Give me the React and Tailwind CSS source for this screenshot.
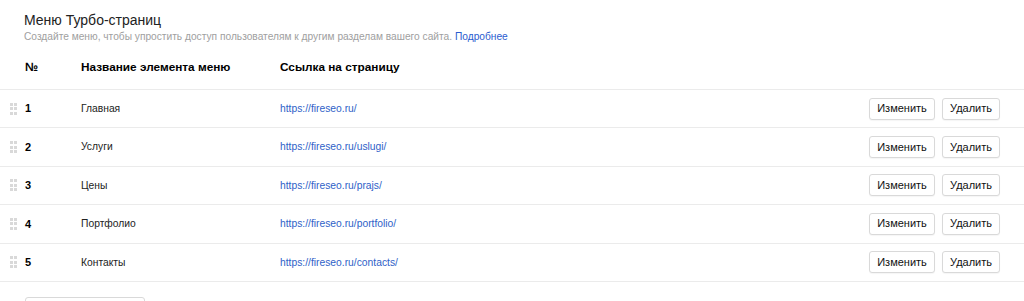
import React from 'react';

const ITEMS = [
  { n: 1, name: 'Главная', url: 'https://fireseo.ru/' },
  { n: 2, name: 'Услуги', url: 'https://fireseo.ru/uslugi/' },
  { n: 3, name: 'Цены', url: 'https://fireseo.ru/prajs/' },
  { n: 4, name: 'Портфолио', url: 'https://fireseo.ru/portfolio/' },
  { n: 5, name: 'Контакты', url: 'https://fireseo.ru/contacts/' },
];

function Handle() {
  return (
    <div className="grid grid-cols-2 gap-x-[1px] gap-y-[1.5px] w-[7px] shrink-0">
      {[0, 1, 2, 3, 4, 5].map(i => (
        <span key={i} className="block w-[3px] h-[3px] bg-[#d9d9d9]" />
      ))}
    </div>
  );
}

function Btn({ children, w }) {
  return (
    <button className={`h-[22px] ${w} border border-[#d9d9d9] rounded-[3px] bg-white text-[11px] text-[#111] leading-none shadow-[0_1px_1px_rgba(0,0,0,0.04)]`}>
      {children}
    </button>
  );
}

export default function App() {
  return (
    <div className="w-[1024px] h-[301px] overflow-hidden bg-white text-black" style={{ fontFamily: '"Liberation Sans", Arial, sans-serif' }}>
      <div className="px-6 pt-[11px]">
        <h1 className="text-[14px] leading-[18px] font-normal text-[#222]">Меню Турбо-страниц</h1>
        <p className="mt-[2px] text-[10.2px] leading-[12px] text-[#a0a0a0]">
          Создайте меню, чтобы упростить доступ пользователям к другим разделам вашего сайта.{' '}
          <a className="text-[#2b5ccf]">Подробнее</a>
        </p>
      </div>

      {/* header */}
      <div className="mt-[18px] h-[29px] border-b border-[#ebebeb] flex items-start pl-[25px] text-[11.8px] leading-[12px] font-bold">
        <div className="w-[56px]">№</div>
        <div className="w-[199px]">Название элемента меню</div>
        <div>Ссылка на страницу</div>
      </div>

      {ITEMS.map(it => (
        <div key={it.n} className="h-[38.4px] border-b border-[#ebebeb] flex items-center pl-[10px] pr-6 text-[10.3px]">
          <Handle />
          <div className="ml-[8px] w-[56px] font-bold text-[11px]">{it.n}</div>
          <div className="w-[199px] text-[#222]">{it.name}</div>
          <a className="text-[#2f5fc8]">{it.url}</a>
          <div className="ml-auto flex gap-[7px]">
            <Btn w="w-[66px]">Изменить</Btn>
            <Btn w="w-[58px]">Удалить</Btn>
          </div>
        </div>
      ))}

      <div className="ml-[25px] mt-[15px] w-[120px] h-[22px] border border-[#d9d9d9] rounded-[3px]" />
    </div>
  );
}
